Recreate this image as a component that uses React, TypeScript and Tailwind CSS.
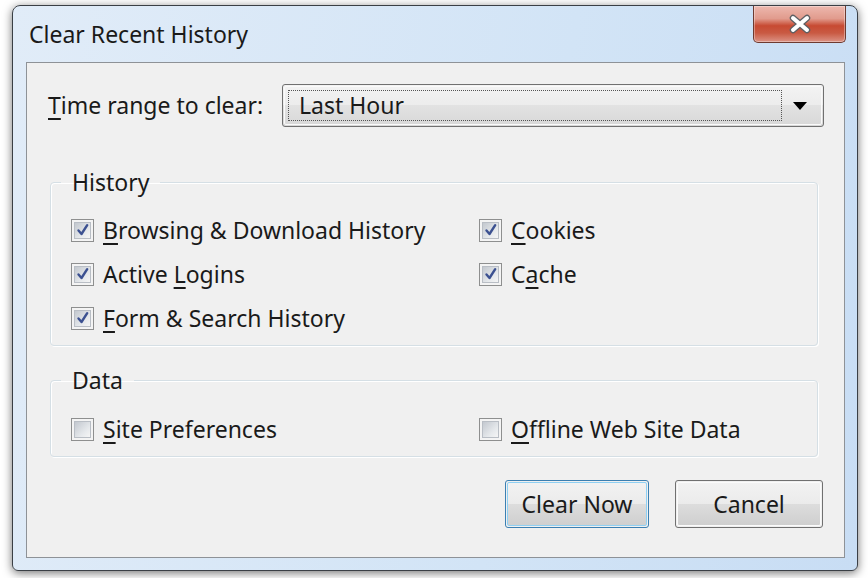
import type { ReactNode } from "react";

const font = { fontFamily: '"Noto Sans", "Open Sans", sans-serif' };

// Win7 style checkbox
function CheckBox({ checked }: { checked: boolean }) {
    return (
        <span className="flex h-[23px] w-[23px] shrink-0 border border-[#8e8f8f] bg-[#f4f4f4] p-[2px]">
            <span className="flex h-full w-full items-center justify-center border border-[#b9bec5] bg-[linear-gradient(135deg,#c3c8cf,#e6e9ec_65%,#f5f5f5)]">
                {checked && (
                    <svg width="14" height="14" viewBox="0 0 14 14">
                        <path d="M2.5 7.5 L5.5 11 L11.2 2.2" fill="none" stroke="#3c5191" strokeWidth="2.4" strokeLinecap="round" strokeLinejoin="round" />
                    </svg>
                )}
            </span>
        </span>
    );
}

type Item = { pre?: string, acc: string, post: string, checked: boolean };

function Option({ item }: { item: Item }) {
    return (
        <label className="flex h-[44px] items-center gap-[9px]">
            <CheckBox checked={item.checked} />
            <span className="text-[23px] leading-none text-[#1a1a1a]">
                {item.pre}
                <u className="underline-offset-[4px] decoration-[1.5px]">{item.acc}</u>
                {item.post}
            </span>
        </label>
    );
}

function Group({ title, left, right, pt }: { title: string, left: Item[], right: Item[], pt: string }) {
    return (
        <fieldset className={`ml-[2px] mr-[6px] rounded-[4px] border border-[#d5dfe5] px-[10px] pb-[5px] shadow-[1px_1px_0_#fff,inset_1px_1px_0_#fff] ${pt}`}>
            <legend className="px-[11px] text-[23px] leading-[26px] text-[#1a1a1a]">{title}</legend>
            <div className="grid grid-cols-[408px_1fr] pl-[10px]">
                <div className="flex flex-col">
                    {left.map((it) => <Option key={it.acc + it.post} item={it} />)}
                </div>
                <div className="flex flex-col">
                    {right.map((it) => <Option key={it.acc + it.post} item={it} />)}
                </div>
            </div>
        </fieldset>
    );
}

function Button({ children, primary, width }: { children: ReactNode, primary?: boolean, width: string }) {
    return (
        <button
            type="button"
            className={`${width} h-[48px] rounded-[3px] border p-[1px] ${primary ? "border-[#3c7fb1]" : "border-[#707070]"}`}
        >
            <span
                className={`flex h-full w-full items-center justify-center rounded-[2px] border text-[23px] text-[#1a1a1a] bg-[linear-gradient(#f2f2f2,#ebebeb_50%,#dddddd_50%,#cfcfcf)] ${primary ? "border-[#8fd0f3]" : "border-[#fbfbfb]"}`}
            >
                {children}
            </span>
        </button>
    );
}

const history = {
    left: [
        { acc: "B", post: "rowsing & Download History", checked: true },
        { pre: "Active ", acc: "L", post: "ogins", checked: true },
        { acc: "F", post: "orm & Search History", checked: true },
    ],
    right: [
        { acc: "C", post: "ookies", checked: true },
        { pre: "C", acc: "a", post: "che", checked: true },
    ],
};

const data = {
    left: [{ acc: "S", post: "ite Preferences", checked: false }],
    right: [{ acc: "O", post: "ffline Web Site Data", checked: false }],
};

export default function App() {
    return (
        <div className="h-[578px] w-[868px] overflow-hidden bg-white pl-[12px] pt-[5px]" style={font}>
            <div className="flex h-[566px] w-[846px] flex-col rounded-t-[8px] rounded-b-[6px] border border-[#3a3f45] bg-[linear-gradient(100deg,#e1ecf8,#d2e4f6_60%,#c8ddf4)] shadow-[0_2px_10px_rgba(0,0,0,0.55)]">
                {/* title bar */}
                <div className="flex h-[56px] items-start justify-between">
                    <div className="mt-[16px] pl-[16px] text-[23px] leading-[24px] text-[#1a1a1a]">Clear Recent History</div>
                    <div className="mr-[11px] flex h-[37px] w-[93px] items-center justify-center rounded-b-[5px] border border-t-0 border-[#6e3a30] bg-[linear-gradient(#edb8ae,#e19b8d_35%,#c74a32_55%,#c95a43_75%,#dc9385)] shadow-[inset_0_0_0_1px_rgba(255,255,255,0.35)]">
                        <svg width="26" height="20" viewBox="0 0 26 20">
                            <path d="M6 4 L20 16 M20 4 L6 16" stroke="#5d5f63" strokeWidth="6.5" strokeLinecap="round" />
                            <path d="M6 4 L20 16 M20 4 L6 16" stroke="#ffffff" strokeWidth="4" strokeLinecap="round" />
                        </svg>
                    </div>
                </div>

                {/* client area */}
                <div className="ml-[13px] mr-[12px] flex h-[496px] flex-col border border-[#8e9297] bg-[#f0f0f0] pl-[21px] pr-[20px] pt-[21px] text-[#1a1a1a]">
                    <div className="flex h-[43px] items-center">
                        <span className="w-[234px] text-[23px] leading-none">
                            <u className="underline-offset-[4px] decoration-[1.5px]">T</u>ime range to clear:
                        </span>
                        <div className="flex h-full flex-1 rounded-[3px] border border-[#707070] bg-[linear-gradient(#f3f3f3,#ececec_50%,#e2e2e2_50%,#d8d8d8)] p-[1px]">
                            <div className="flex flex-1 rounded-[2px] border border-[#fafafa] p-[3px]">
                                <div className="flex flex-1 items-center border border-dotted border-[#555] pl-[10px] text-[23px] leading-none">Last Hour</div>
                                <div className="flex w-[36px] items-center justify-center">
                                    <svg width="14" height="8" viewBox="0 0 14 8">
                                        <path d="M0 0 H14 L7 8 Z" fill="#000" />
                                    </svg>
                                </div>
                            </div>
                        </div>
                    </div>

                    <div className="mt-[42px]">
                        <Group title="History" left={history.left} right={history.right} pt="pt-[13px]" />
                    </div>
                    <div className="mt-[21px]">
                        <Group title="Data" left={data.left} right={data.right} pt="pt-[14px]" />
                    </div>

                    <div className="mr-[1px] mt-[23px] flex justify-end gap-[26px]">
                        <Button primary width="w-[144px]">Clear Now</Button>
                        <Button width="w-[148px]">Cancel</Button>
                    </div>
                </div>
            </div>
        </div>
    );
}
